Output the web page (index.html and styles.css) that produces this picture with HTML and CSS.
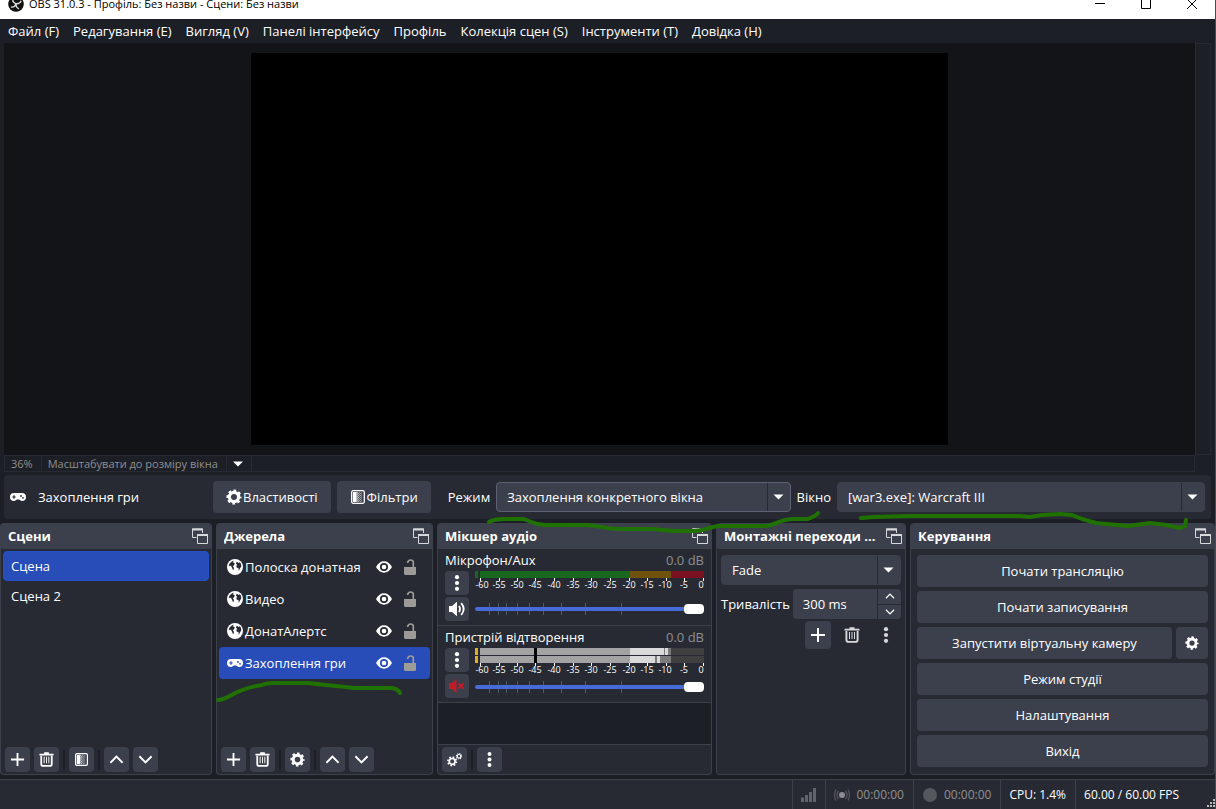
FILE: index.html
```html
<!DOCTYPE html>
<html lang="uk">
<head>
<meta charset="utf-8">
<title>OBS 31.0.3 - Профіль: Без назви - Сцени: Без назви</title>
<link rel="stylesheet" href="styles.css">
</head>
<body>
<svg class="sprite" aria-hidden="true">
  <symbol id="gear" viewBox="0 0 16 16"><circle cx="8" cy="8" r="4.6" fill="none" stroke="currentColor" stroke-width="3.2"/><circle cx="8" cy="8" r="6.4" fill="none" stroke="currentColor" stroke-width="2.4" stroke-dasharray="2.7 2.327" stroke-dashoffset="1.35"/></symbol>
  <symbol id="plus" viewBox="0 0 16 16"><path d="M8 1v14M1 8h14" stroke="currentColor" stroke-width="2"/></symbol>
  <symbol id="trash" viewBox="0 0 16 16"><path d="M.5 2.7h15M5.5 1.2h5" stroke="currentColor" stroke-width="1.8" fill="none"/><path d="M2.4 4v8.7q0 2.2 2.2 2.2h6.8q2.2 0 2.2-2.2V4" fill="none" stroke="currentColor" stroke-width="1.9"/><path d="M5.5 5v7M8 5v7M10.5 5v7" stroke="currentColor"/></symbol>
  <symbol id="filter" viewBox="0 0 16 16"><rect x="1.7" y="1.7" width="12.6" height="12.6" rx="1.5" fill="none" stroke="currentColor" stroke-width="1.3"/><path d="M3 3h3.6v10H3z" fill="currentColor"/><path d="M7.1 3v10M8.1 4v9" stroke="currentColor" stroke-dasharray="1 1"/><path d="M9.2 3v10M10.3 4v9" stroke="currentColor" stroke-dasharray="1 1" opacity=".65"/><path d="M11.4 3v10" stroke="currentColor" opacity=".3"/></symbol>
  <symbol id="up" viewBox="0 0 16 16"><path d="M1.5 11.5 8 5l6.500 6.500" fill="none" stroke="currentColor" stroke-width="2"/></symbol>
  <symbol id="down" viewBox="0 0 16 16"><path d="M1.5 4.500 8 11l6.500-6.500" fill="none" stroke="currentColor" stroke-width="2"/></symbol>
  <symbol id="dots" viewBox="0 0 16 16"><g fill="currentColor"><circle cx="8" cy="2.200" r="2.100"/><circle cx="8" cy="8" r="2.100"/><circle cx="8" cy="13.800" r="2.100"/></g></symbol>
  <symbol id="tri" viewBox="0 0 10 6"><path d="M0 .5h10L5 5.500z" fill="currentColor"/></symbol>
  <symbol id="pop" viewBox="0 0 16 16"><g fill="none" stroke="currentColor"><path d="M4.500 9.500h-4V1h10v4"/><path d="M5.500 6.500h10v9h-10z"/><path d="M0 1.500h11M5 7h11" stroke-width="2"/></g></symbol>
  <symbol id="pad" viewBox="0 0 16 10"><path d="M4 1h8a4 4 0 0 1 0 8c-1.500 0-2.200-1.500-3-1.500H7C6.200 7.500 5.500 9 4 9a4 4 0 0 1 0-8z" fill="currentColor"/><path d="M4 3.300v3.400M2.300 5h3.400" stroke="var(--eye-gap)" stroke-width="1.200"/><circle cx="11" cy="4" r=".9" fill="var(--eye-gap)"/><circle cx="13" cy="5.800" r=".9" fill="var(--eye-gap)"/></symbol>
  <symbol id="globe" viewBox="0 0 16 16"><circle cx="8" cy="8" r="8" fill="currentColor"/><path d="M6.500 1.700C3.500 2.500 1.800 5 1.700 7.500l1.500-.9 1.200.9 1 2.300.8 1.700.8-2.600-1-1.500 1-1.500L8 4.600 6.300 3.800zM9.800 2.500l-1 2 1.200 1-.7 1.800.6 1.400 1.500.4.3 3 1.200-2.500 1.400-2.200-.4-3-1.500-1.200-.9.700z" fill="#272a33"/></symbol>
  <symbol id="eye" viewBox="0 0 16 12"><path d="M0 6Q3.200.3 8 .3T16 6q-3.200 5.700-8 5.700T0 6z" fill="currentColor"/><circle cx="8" cy="6" r="3.200" fill="none" stroke="var(--eye-gap)" stroke-width="1.700"/></symbol>
  <symbol id="lock" viewBox="0 0 12 16"><path d="M0 8h12v6.500q0 1.500-1.500 1.500h-9Q0 16 0 14.500z" fill="currentColor"/><path d="M9.300 8V3.500Q9.300 1 6.500 1 4 1 3.600 4" fill="none" stroke="currentColor" stroke-width="1.700"/></symbol>
  <symbol id="sound" viewBox="0 0 16 16"><path d="M0 5h3l5-4.200v14.400L3 11H0z" fill="currentColor"/><path d="M10 5q2 3 0 6M12.200 2.200q5 5.800 0 11.600" fill="none" stroke="currentColor" stroke-width="1.800"/></symbol>
  <symbol id="muted" viewBox="0 0 16 16"><path d="M0 5h3l4.500-4v14L3 11H0z" fill="currentColor"/><path d="m9.500 5.500 5 5m0-5-5 5" stroke="currentColor" stroke-width="2"/></symbol>
  <symbol id="gears" viewBox="0 0 16 16"><g fill="none" stroke="currentColor"><circle cx="5.500" cy="10" r="3.100" stroke-width="1.800"/><circle cx="5.500" cy="10" r="4.500" stroke-width="1.800" stroke-dasharray="1.700 1.834"/><circle cx="12.800" cy="4.500" r="1.900" stroke-width="1.200"/><circle cx="12.800" cy="4.500" r="2.800" stroke-width="1.200" stroke-dasharray="1.100 1.099"/></g></symbol>
</svg>

<div class="window">
  <header class="titlebar">
    <div class="titlebar-row">
      <svg class="app-logo" viewBox="0 0 16 16"><circle cx="8" cy="8" r="7.800" fill="#111"/><g fill="none" stroke="#ddd" stroke-width="1.300"><path d="M5 2.500q-1 4 3 5.200M8 7.700q4 .3 5.200-2.900M8 7.700q-.3 4 3 5.200M3 11q3.700.7 5-3.300"/></g></svg>
      <span class="title">OBS 31.0.3 - Профіль: Без назви - Сцени: Без назви</span>
      <button class="win-btn" aria-label="Згорнути"><svg viewBox="0 0 10 10"><path d="M0 4.500h10" stroke="#000"/></svg></button>
      <button class="win-btn" aria-label="Розгорнути"><svg viewBox="0 0 10 10"><path d="M.5.5h9v9h-9z" fill="none" stroke="#000"/></svg></button>
      <button class="win-btn" aria-label="Закрити"><svg viewBox="0 0 10 10"><path d="m0 0 10 10M10 0 0 10" stroke="#000"/></svg></button>
    </div>
  </header>

  <nav class="menubar">
    <button>Файл (F)</button><button>Редагування (E)</button><button>Вигляд (V)</button><button>Панелі інтерфейсу</button><button>Профіль</button><button>Колекція сцен (S)</button><button>Інструменти (T)</button><button>Довідка (H)</button>
  </nav>

  <main class="preview">
    <div class="preview-area"><div class="canvas"></div></div>
    <div class="vscroll"></div>
    <div class="zoombar">
      <span>36%</span><span>Масштабувати до розміру вікна</span><button aria-label="Масштаб"><svg viewBox="0 0 10 6"><use href="#tri"/></svg></button>
    </div>
  </main>

  <section class="context">
    <div class="context-name"><svg class="pad"><use href="#pad"/></svg>Захоплення гри</div>
    <button class="btn"><svg class="i16"><use href="#gear"/></svg>Властивості</button>
    <button class="btn"><svg class="i16"><use href="#filter"/></svg>Фільтри</button>
    <label for="mode">Режим</label>
    <div class="combo mode focused"><select id="mode"><option>Захоплення конкретного вікна</option></select><svg class="tri"><use href="#tri"/></svg></div>
    <label for="win">Вікно</label>
    <div class="combo win"><select id="win"><option>[war3.exe]: Warcraft III</option></select><svg class="tri"><use href="#tri"/></svg></div>
  </section>

  <div class="docks">
    <section class="dock">
      <h2><span>Сцени</span><svg class="i16"><use href="#pop"/></svg></h2>
      <ul class="scenes"><li class="selected">Сцена</li><li>Сцена 2</li></ul>
      <div class="tools">
        <button aria-label="Додати"><svg><use href="#plus"/></svg></button><button aria-label="Видалити"><svg><use href="#trash"/></svg></button><i></i><button aria-label="Фільтри"><svg><use href="#filter"/></svg></button><i></i><button aria-label="Вгору"><svg><use href="#up"/></svg></button><button aria-label="Вниз"><svg><use href="#down"/></svg></button>
      </div>
    </section>

    <section class="dock">
      <h2><span>Джерела</span><svg class="i16"><use href="#pop"/></svg></h2>
      <ul class="sources">
        <li><svg class="i16"><use href="#globe"/></svg><span>Полоска донатная</span><svg class="eye"><use href="#eye"/></svg><svg class="lock"><use href="#lock"/></svg></li>
        <li><svg class="i16"><use href="#globe"/></svg><span>Видео</span><svg class="eye"><use href="#eye"/></svg><svg class="lock"><use href="#lock"/></svg></li>
        <li><svg class="i16"><use href="#globe"/></svg><span>ДонатАлертс</span><svg class="eye"><use href="#eye"/></svg><svg class="lock"><use href="#lock"/></svg></li>
        <li class="selected"><svg class="pad"><use href="#pad"/></svg><span>Захоплення гри</span><svg class="eye"><use href="#eye"/></svg><svg class="lock"><use href="#lock"/></svg></li>
      </ul>
      <div class="tools">
        <button aria-label="Додати"><svg><use href="#plus"/></svg></button><button aria-label="Видалити"><svg><use href="#trash"/></svg></button><i></i><button aria-label="Властивості"><svg><use href="#gear"/></svg></button><i></i><button aria-label="Вгору"><svg><use href="#up"/></svg></button><button aria-label="Вниз"><svg><use href="#down"/></svg></button>
      </div>
    </section>

    <section class="dock">
      <h2><span>Мікшер аудіо</span><svg class="i16"><use href="#pop"/></svg></h2>
      <div class="channel">
        <div class="channel-head"><label for="mic">Мікрофон/Aux</label><output>0.0 dB</output></div>
        <div class="channel-btns"><button aria-label="Меню"><svg><use href="#dots"/></svg></button><button aria-label="Вимкнути звук"><svg><use href="#sound"/></svg></button></div>
        <div class="levels">
          <svg class="meter" viewBox="0 0 229 19">
            <path d="M0 0h3v7H0zM5 0h150v7H5z" fill="#19681f"/><path d="M155 0h41v7h-41z" fill="#70520f"/><path d="M196 0h33v7h-33z" fill="#7b1020"/>
            <path d="M5.500 7v3M24.500 7v3M42.500 7v3M60.500 7v3M79.500 7v3M98.500 7v3M116.500 7v3M135.500 7v3M154.500 7v3M172.500 7v3M191.500 7v3M209.500 7v3M228.500 7v3" stroke="#fff"/>
            <g class="scale"><text x="7" y="17">-60</text><text x="24" y="17">-55</text><text x="42" y="17">-50</text><text x="60" y="17">-45</text><text x="79" y="17">-40</text><text x="98" y="17">-35</text><text x="116" y="17">-30</text><text x="135" y="17">-25</text><text x="154" y="17">-20</text><text x="172" y="17">-15</text><text x="190" y="17">-10</text><text x="209" y="17">-5</text><text x="226" y="17">0</text></g>
          </svg>
          <div class="fader"><svg viewBox="0 0 229 12"><path d="M14.500 0v12M23.500 0v12M31.500 0v12M42.500 0v12M54.500 0v12M68.500 0v12M86.500 0v12M110.500 0v12M146.500 0v12" stroke="#555a68"/></svg><input id="mic" type="range" min="0" max="100" value="100"></div>
        </div>
      </div>
      <div class="channel">
        <div class="channel-head"><label for="desk">Пристрій відтворення</label><output>0.0 dB</output></div>
        <div class="channel-btns"><button aria-label="Меню"><svg><use href="#dots"/></svg></button><button class="off" aria-label="Увімкнути звук"><svg><use href="#muted"/></svg></button></div>
        <div class="levels">
          <svg class="meter" viewBox="0 0 229 27">
            <path d="M0 0h3v7H0zM0 8h3v7H0z" fill="#e2ab2a"/><path d="M5 0h150v7H5zM5 8h150v7H5z" fill="#a3a3a3"/><path d="M59 0h3v15h-3z" fill="#000"/><path d="M155 0h34v7h-34zM190 0h3v7h-3zM155 8h25v7h-25zM182 8h3v7h-3z" fill="#d9d9d9"/><path d="M189 0h1v7h-1zM193 0h3v7h-3zM180 8h2v7h-2zM185 8h11v7h-11z" fill="#7b7b7b"/><path d="M196 0h33v7h-33zM196 8h33v7h-33z" fill="#404040"/>
            <path d="M5.500 15v3M24.500 15v3M42.500 15v3M60.500 15v3M79.500 15v3M98.500 15v3M116.500 15v3M135.500 15v3M154.500 15v3M172.500 15v3M191.500 15v3M209.500 15v3M228.500 15v3" stroke="#fff"/>
            <g class="scale"><text x="7" y="25">-60</text><text x="24" y="25">-55</text><text x="42" y="25">-50</text><text x="60" y="25">-45</text><text x="79" y="25">-40</text><text x="98" y="25">-35</text><text x="116" y="25">-30</text><text x="135" y="25">-25</text><text x="154" y="25">-20</text><text x="172" y="25">-15</text><text x="190" y="25">-10</text><text x="209" y="25">-5</text><text x="226" y="25">0</text></g>
          </svg>
          <div class="fader"><svg viewBox="0 0 229 12"><path d="M14.500 0v12M23.500 0v12M31.500 0v12M42.500 0v12M54.500 0v12M68.500 0v12M86.500 0v12M110.500 0v12M146.500 0v12" stroke="#555a68"/></svg><input id="desk" type="range" min="0" max="100" value="100"></div>
        </div>
      </div>
      <div class="mixer-empty"></div>
      <div class="tools"><button aria-label="Додаткові налаштування"><svg><use href="#gears"/></svg></button><i></i><button aria-label="Меню"><svg><use href="#dots"/></svg></button></div>
    </section>

    <section class="dock">
      <h2><span>Монтажні переходи ...</span><svg class="i16"><use href="#pop"/></svg></h2>
      <div class="transitions">
        <div class="combo"><select aria-label="Перехід"><option>Fade</option></select><svg class="tri"><use href="#tri"/></svg></div>
        <div class="duration"><label for="dur">Тривалість</label>
          <div class="spin"><input id="dur" type="text" value="300 ms"><div><button aria-label="Більше"><svg><use href="#up"/></svg></button><button aria-label="Менше"><svg><use href="#down"/></svg></button></div></div>
        </div>
        <div class="trans-tools"><button class="filled" aria-label="Додати"><svg><use href="#plus"/></svg></button><button aria-label="Видалити"><svg><use href="#trash"/></svg></button><button aria-label="Меню"><svg><use href="#dots"/></svg></button></div>
      </div>
    </section>

    <section class="dock">
      <h2><span>Керування</span><svg class="i16"><use href="#pop"/></svg></h2>
      <div class="controls">
        <button class="btn">Почати трансляцію</button>
        <button class="btn">Почати записування</button>
        <div class="pair"><button class="btn">Запустити віртуальну камеру</button><button class="btn square" aria-label="Налаштувати камеру"><svg class="i14"><use href="#gear"/></svg></button></div>
        <button class="btn">Режим студії</button>
        <button class="btn">Налаштування</button>
        <button class="btn">Вихід</button>
      </div>
    </section>
  </div>

  <footer class="status">
    <div class="cell"><svg class="i16" viewBox="0 0 16 16"><path d="M0 10.500h3V15H0zM4 8h3v7H4zM8 5h3v10H8zM12 1h3v14h-3z" fill="#62646c"/></svg></div>
    <div class="cell dim"><svg class="i16" viewBox="0 0 16 16"><circle cx="8" cy="8" r="3" fill="#8c8d92"/><path d="M4.500 4q-3 4 0 8M11.500 4q3 4 0 8M2 2.500q-3 5.500 0 11M14 2.500q3 5.500 0 11" fill="none" stroke="#53555d" stroke-width="1.300"/></svg>00:00:00</div>
    <div class="cell dim"><svg class="i16" viewBox="0 0 16 16"><circle cx="8" cy="8" r="7" fill="#55575f"/></svg>00:00:00</div>
    <div class="cell">CPU: 1.4%</div>
    <div class="cell fps">60.00 / 60.00 FPS</div>
    <svg class="grip" viewBox="0 0 8 8"><path d="M6 0h2v2H6zM3 3h2v2H3zM6 3h2v2H6zM0 6h2v2H0zM3 6h2v2H3zM6 6h2v2H6z" fill="#bbb"/></svg>
  </footer>
</div>

<svg class="marker" viewBox="0 0 1216 809" aria-hidden="true">
  <path d="M489 522q5-3 16-3h18c6 1 8 5 22 6h40c14 0 18 4 35 4h32l22 2h22c10-1 14-4 22-5h46c12 0 14-7 30-7h14q8-3 10-6"/>
  <path d="M861 518l13-1 36-1h110l10 1 12-2 18-1 12 1 10 4 14 4 32 3 22-3 16 2 14 3 5-2 1-6"/>
  <path d="M218 700c10 0 16-11 44-15q4-2 12-2h34c16 2 30 3 46 5h38q6 1 8 5"/>
</svg>
</body>
</html>
```

FILE: styles.css
```css
* { box-sizing: border-box; }

:root {
  --bg: #1d1f26;
  --panel: #272a33;
  --raised: #3c404d;
  --line: #3c404b;
  --blue: #284cb8;
  --dim: #8f8f90;
  --eye-gap: #272a33;
}

body {
  margin: 0;
  background: var(--bg);
  color: #fff;
  font: 13px/18px "Open Sans", "Noto Sans", sans-serif;
}

button, input, select {
  margin: 0;
  padding: 0;
  border: 0;
  background: none;
  color: inherit;
  font: inherit;
}

svg { display: block; flex: none; }
.sprite { position: absolute; width: 0; height: 0; }
.i16 { width: 16px; height: 16px; }
.i14 { width: 14px; height: 14px; }
.pad { width: 16px; height: 10px; }

.window {
  display: flex;
  flex-direction: column;
  min-height: 100vh;
  border-right: 1px solid #484b4d;
}

/* Title bar */
.titlebar { height: 19px; overflow: hidden; background: #fff; color: #000; }
.titlebar-row { display: flex; align-items: center; height: 30px; margin-top: -11px; padding-left: 8px; }
.app-logo { width: 16px; height: 16px; }
.title { flex: 1; padding-left: 5px; font-size: 11px; }
.win-btn { display: flex; justify-content: center; align-items: center; width: 46px; height: 30px; }
.win-btn svg { width: 10px; height: 10px; }

.menubar { display: flex; gap: 14px; height: 24px; padding: 0 8px; }
.menubar button { white-space: nowrap; }

/* Preview */
.preview {
  display: grid;
  grid-template: 1fr 17px / 1fr 16px;
  flex: 1;
  min-height: 160px;
  margin: 0 4px;
}
.preview-area { display: flex; justify-content: center; padding: 10px; background: #131418; }
.canvas { aspect-ratio: 16 / 9; background: #000; }
.vscroll { border: 1px solid var(--panel); }
.zoombar { display: flex; border: 1px solid var(--panel); color: var(--dim); font-size: 11px; line-height: 16px; }
.zoombar > * { padding: 0 8px 0 6px; border-right: 1px solid var(--panel); }
.zoombar svg { width: 10px; height: 6px; color: #fff; }

/* Source context bar */
.context {
  display: flex;
  align-items: center;
  gap: 6px;
  height: 44px;
  margin: 3px 4px 4px;
  padding: 0 6px;
  border-radius: 4px;
  background: var(--panel);
}
.context-name { display: flex; align-items: center; gap: 12px; width: 197px; }
.context > .btn { gap: 1px; padding: 0 13px; }
.context > .btn + label { margin-left: 11px; }
.mode { flex: 294 1 0; }
.win { flex: 368 1 0; }

.btn {
  display: flex;
  justify-content: center;
  align-items: center;
  height: 32px;
  border-radius: 4px;
  background: var(--raised);
  white-space: nowrap;
}

.combo { display: grid; grid-template-columns: 1fr 23px; align-items: center; height: 30px; border: 1px solid var(--raised); border-radius: 4px; background: var(--raised); }
.combo.focused { border-color: #5b6273; }
.combo select { grid-area: 1 / 1 / 2 / 3; width: 100%; height: 100%; padding-left: 10px; appearance: none; outline: 0; }
.combo .tri { grid-area: 1 / 2; width: 23px; height: 6px; pointer-events: none; }
.combo::after { content: ""; grid-area: 1 / 2; width: 1px; height: 28px; background: var(--panel); }

/* Docks */
.docks { display: grid; grid-template-columns: 212fr 217fr 275fr 190fr 305fr; gap: 4px; }
.dock { display: flex; flex-direction: column; min-width: 0; border: 1px solid var(--line); border-top: 0; border-radius: 4px; background: var(--panel); }
.dock h2 {
  display: flex;
  align-items: center;
  height: 26px;
  margin: 0;
  padding: 0 3px 0 7px;
  border-radius: 4px 4px 0 0;
  background: var(--raised);
  font-size: 13px;
}
.dock h2 span { flex: 1; overflow: hidden; white-space: nowrap; }
.dock h2 svg { color: #d8d9dc; }

.tools { display: flex; gap: 4px; margin-top: auto; padding: 2px 4px; }
.tools button { display: flex; justify-content: center; align-items: center; width: 25px; height: 25px; border-radius: 4px; background: var(--raised); }
.tools svg { width: 15px; height: 15px; }
.tools i { width: 2px; height: 19px; margin: 3px 0; background: var(--bg); }

ul { margin: 0; padding: 2px; list-style: none; }
.scenes li { padding: 6px 7px; border: 1px solid transparent; border-radius: 4px; line-height: 16px; }
.scenes li.selected { background: var(--blue); border-color: #2450c8; }
.sources li { display: flex; align-items: center; gap: 2px; height: 32px; padding: 0 14px 0 8px; border-radius: 4px; }
.sources li.selected { --eye-gap: #284cb8; background: var(--blue); }
.sources span { flex: 1; white-space: nowrap; }
.eye { width: 16px; height: 12px; margin-right: 10px; }
.lock { width: 12px; height: 16px; color: #9c9b97; }

/* Audio mixer */
.channel { display: grid; grid-template: 22px 50px / 24px 1fr; column-gap: 6px; padding: 0 7px 4px; border-bottom: 1px solid var(--line); }
.channel-head { grid-column: 1 / 3; display: flex; justify-content: space-between; line-height: 22px; }
.channel-head output { color: var(--dim); }
.channel-btns { display: grid; gap: 2px; }
.channel-btns button { display: flex; justify-content: center; align-items: center; border-radius: 4px; background: var(--raised); }
.channel-btns svg { width: 16px; height: 16px; }
.channel-btns .off { color: #c01c28; }
.levels { display: flex; flex-direction: column; justify-content: space-between; }
.meter { width: 100%; overflow: visible; }
.scale { fill: #fff; font-size: 9px; text-anchor: middle; }
.fader { display: grid; align-items: center; height: 24px; }
.fader > * { grid-area: 1 / 1; width: 100%; }
.fader input { height: 12px; appearance: none; }
.fader input::-webkit-slider-runnable-track { height: 4px; border-radius: 2px; background: #476bd7; }
.fader input::-webkit-slider-thumb { width: 20px; height: 10px; margin-top: -3px; border-radius: 4px; background: #fff; appearance: none; }
.mixer-empty { flex: 1; border-bottom: 1px solid var(--line); background: var(--bg); }

/* Transitions */
.transitions { display: grid; grid-template-columns: minmax(0, 1fr); gap: 4px; padding: 6px 4px; }
.duration { display: flex; align-items: center; gap: 3px; }
.spin { display: flex; flex: 1; min-width: 0; height: 30px; border-radius: 4px; background: var(--raised); }
.spin input { flex: 1; min-width: 0; width: 0; padding-left: 10px; }
.spin > div { display: grid; width: 24px; border-left: 1px solid var(--panel); }
.spin button { display: flex; justify-content: center; align-items: center; }
.spin button + button { border-top: 1px solid var(--panel); }
.spin svg { width: 10px; height: 10px; }
.trans-tools { display: flex; justify-content: flex-end; gap: 8px; margin-top: -2px; padding-right: 2px; }
.trans-tools button { display: flex; justify-content: center; align-items: center; width: 26px; height: 28px; border-radius: 4px; color: #d8d9dc; }
.trans-tools .filled { background: var(--raised); color: #fff; }
.trans-tools svg { width: 16px; height: 16px; }

.controls { display: grid; gap: 4px; padding: 6px 6px 7px; }
.pair { display: grid; grid-template-columns: 1fr 32px; gap: 4px; }

/* Status bar */
.status { display: flex; justify-content: flex-end; height: 30px; margin-top: 4px; border-top: 1px solid var(--line); background: var(--panel); font-size: 12px; }
.cell { display: flex; align-items: center; gap: 6px; padding: 0 8px; border-left: 1px solid var(--line); }
.cell + .cell { padding-right: 9px; }
.cell.dim { color: var(--dim); }
.status .fps { padding-right: 28px; }
.grip { align-self: flex-end; width: 8px; height: 8px; margin-bottom: 2px; }

/* Hand-drawn highlights above the interface */
.marker { position: absolute; top: 0; left: 0; width: 100%; pointer-events: none; fill: none; stroke: #207200; stroke-width: 4; stroke-linecap: round; stroke-linejoin: round; }
```
